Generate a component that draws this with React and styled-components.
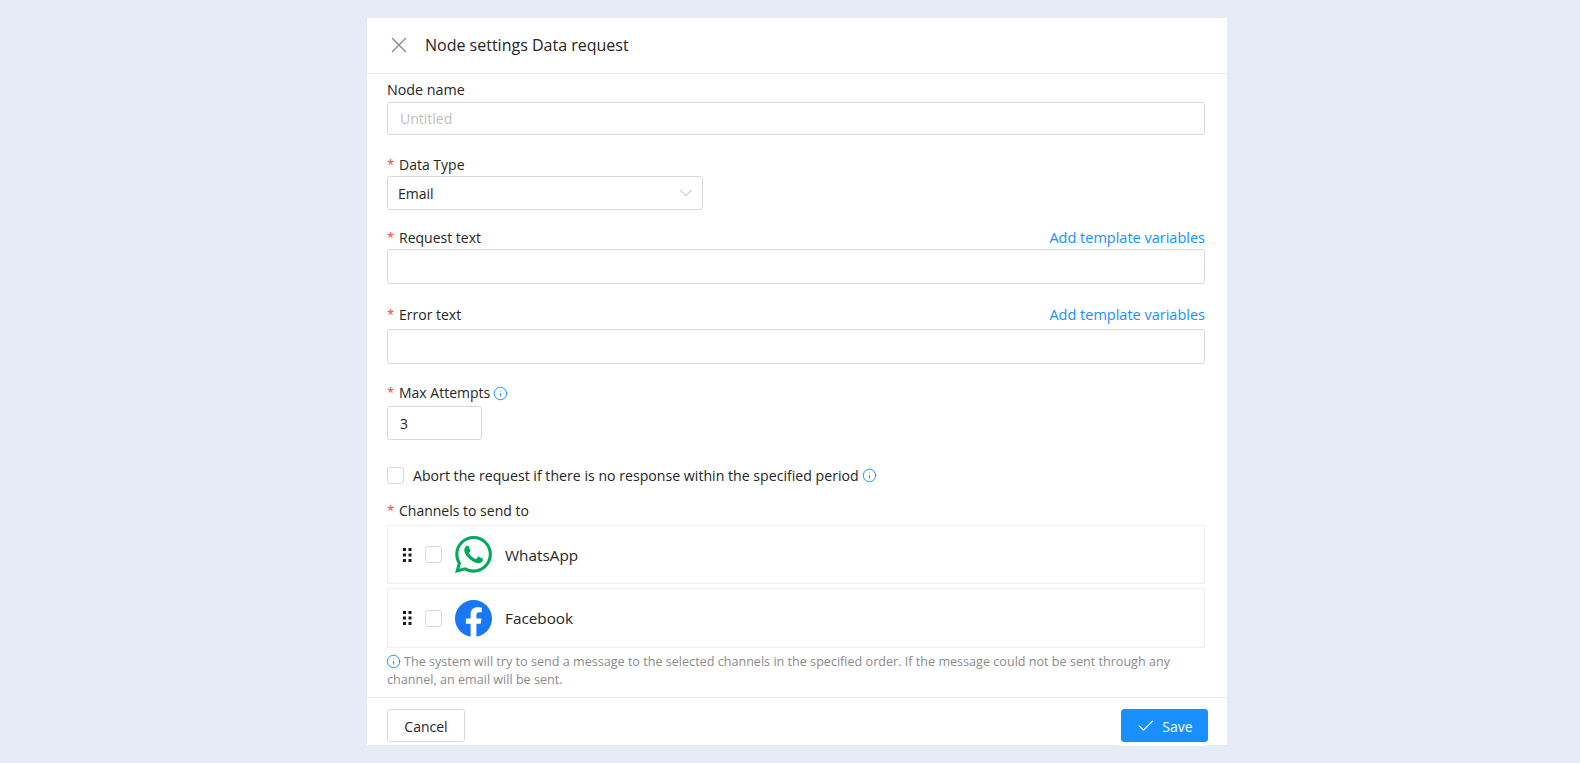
import React from 'react'
import styled, { createGlobalStyle } from 'styled-components'
import { Check, ChevronDown, Info, X } from 'lucide-react'

const GlobalStyle = createGlobalStyle`
    html, body {
        margin: 0;
        height: 100%;
        background: #e5ecf6;
        font-family: "Open Sans", "Noto Sans", sans-serif;
        font-size: 14px;
        color: #262626;
    }
    * {
        box-sizing: border-box;
    }
`
const Page = styled.div`
    display: flex;
    justify-content: center;
    padding: 18px 0 0 14px;
    height: 763px;
    overflow: hidden;
`
const Panel = styled.div`
    width: 860px;
    height: 727px;
    background: #fff;
    display: flex;
    flex-direction: column;
`
const Header = styled.div`
    display: flex;
    align-items: center;
    height: 56px;
    padding: 0 0 2px 19px;
    border-bottom: 1px solid #eaeaea;
    flex: none;
`
const CloseBtn = styled.div`
    display: flex;
    color: #8c8c8c;
    margin-right: 13px;
`
const Title = styled.div`
    font-size: 16px;
    color: #262626;
`
const Body = styled.div`
    flex: 1;
    padding: 5px 22px 0 20px;
`
const Field = styled.div`
    margin-bottom: ${(p) => p.$gap || 18}px;
`
const LabelRow = styled.div`
    display: flex;
    justify-content: space-between;
    align-items: center;
    height: 22px;
    margin-bottom: ${(p) => p.$gap || 0}px;
`
const Label = styled.div`
    display: flex;
    align-items: center;
    gap: 3px;
    line-height: 22px;
    font-size: ${(p) => p.$size || 14}px;
`
const Star = styled.span`
    color: #ff4d4f;
    font-family: "Liberation Mono", monospace;
    font-size: 17px;
    width: 9px;
    transform: translate(-1.5px, 2px);
`
const LinkText = styled.a`
    color: #1890ff;
    font-size: 14.5px;
    margin-bottom: 2px;
    cursor: pointer;
`
const Input = styled.div`
    display: flex;
    align-items: center;
    width: ${(p) => p.$width || '100%'};
    height: ${(p) => p.$height || 33}px;
    padding: 0 12px;
    border: 1px solid #d9d9d9;
    border-radius: 3px;
    color: ${(p) => (p.$placeholder ? '#bfbfbf' : '#262626')};
`
const Select = styled(Input)`
    justify-content: space-between;
    padding: 0 5px 0 10px;
    color: #bfbfbf;
`
const SelectValue = styled.span`
    color: #262626;
`
const CheckRow = styled.div`
    display: flex;
    align-items: center;
    height: 22px;
    margin-bottom: 14px;
`
const Box = styled.span`
    display: inline-block;
    flex: none;
    width: 17px;
    height: 17px;
    border: 1px solid #d9d9d9;
    border-radius: 3px;
    background: #fff;
`
const CheckText = styled.span`
    font-size: 14.15px;
    margin-left: 9px;
    margin-right: 3px;
`
const InfoIcon = styled(Info)`
    color: #1890ff;
    flex: none;
`
const Channel = styled.div`
    display: flex;
    align-items: center;
    height: ${(p) => p.$height || 59}px;
    margin-bottom: ${(p) => p.$gap || 4}px;
    padding-left: 15px;
    border: 1px solid #f0f0f0;
`
const ChannelName = styled.span`
    font-size: 15.3px;
`
const Grip = styled.svg`
    flex: none;
    margin-right: 13px;
`
const ChannelLogo = styled.svg`
    flex: none;
    margin-left: 13px;
    margin-right: 13px;
`
const Hint = styled.div`
    font-size: 12.6px;
    line-height: 18px;
    color: #8c8c8c;
`
const HintIcon = styled(Info)`
    color: #1890ff;
    vertical-align: -3px;
    margin: 0 3px 0 -1px;
`
const Footer = styled.div`
    display: flex;
    justify-content: space-between;
    align-items: flex-start;
    flex: none;
    height: 48px;
    padding: 11px 19px 0 20px;
    border-top: 1px solid #eaeaea;
`
const Button = styled.button`
    display: flex;
    align-items: center;
    justify-content: center;
    gap: 6px;
    height: 33px;
    width: ${(p) => p.$width}px;
    padding: 1px 0 0;
    font: inherit;
    border-radius: 3px;
    border: 1px solid ${(p) => (p.$primary ? '#1890ff' : '#d9d9d9')};
    background: ${(p) => (p.$primary ? '#1890ff' : '#fff')};
    color: ${(p) => (p.$primary ? '#fff' : '#262626')};
    box-shadow: ${(p) => (p.$primary ? '-2px -2px 0 6px #fff' : 'none')};
`

function Dots() {
    const dots = []
    for (const y of [0, 5.5, 11]) {
        dots.push(<rect key={'a' + y} x="0" y={y} width="3" height="3" />)
        dots.push(<rect key={'b' + y} x="5.5" y={y} width="3" height="3" />)
    }
    return (
        <Grip width="9" height="14" viewBox="0 0 9 14" fill="#1a1a1a">
            {dots}
        </Grip>
    )
}

function WhatsApp() {
    return (
        <ChannelLogo width="37" height="37" viewBox="0 0 24 24">
            <path
                fill="#00a95c"
                d="M17.472 14.382c-.297-.149-1.758-.867-2.03-.967-.273-.099-.471-.148-.67.15-.197.297-.767.966-.94 1.164-.173.199-.347.223-.644.075-.297-.15-1.255-.463-2.39-1.475-.883-.788-1.48-1.761-1.653-2.059-.173-.297-.018-.458.13-.606.134-.133.298-.347.446-.52.149-.174.198-.298.298-.497.099-.198.05-.371-.025-.52-.075-.149-.669-1.612-.916-2.207-.242-.579-.487-.5-.669-.51-.173-.008-.371-.01-.57-.01-.198 0-.52.074-.792.372-.272.297-1.04 1.016-1.04 2.479 0 1.462 1.065 2.875 1.213 3.074.149.198 2.096 3.2 5.077 4.487.709.306 1.262.489 1.694.625.712.227 1.36.195 1.871.118.571-.085 1.758-.719 2.006-1.413.248-.694.248-1.289.173-1.413-.074-.124-.272-.198-.57-.347m-5.421 7.403h-.004a9.87 9.87 0 0 1-5.031-1.378l-.361-.214-3.741.982.998-3.648-.235-.374a9.86 9.86 0 0 1-1.51-5.26c.001-5.45 4.436-9.884 9.888-9.884 2.64 0 5.122 1.03 6.988 2.898a9.825 9.825 0 0 1 2.893 6.994c-.003 5.45-4.437 9.884-9.885 9.884m8.413-18.297A11.815 11.815 0 0 0 12.05 0C5.495 0 .16 5.335.157 11.892c0 2.096.547 4.142 1.588 5.945L.057 24l6.305-1.654a11.882 11.882 0 0 0 5.683 1.448h.005c6.554 0 11.89-5.335 11.893-11.893a11.821 11.821 0 0 0-3.48-8.413z"
            />
        </ChannelLogo>
    )
}

function Facebook() {
    return (
        <ChannelLogo width="37" height="37" viewBox="0 0 24 24">
            <circle cx="12" cy="12" r="12" fill="#1877f2" />
            <path
                fill="#fff"
                d="M16.671 15.469 17.203 12h-3.328V9.75c0-.949.465-1.875 1.956-1.875h1.513V4.922s-1.374-.234-2.686-.234c-2.741 0-4.533 1.661-4.533 4.668V12H7.078v3.469h3.047V24a12.1 12.1 0 0 0 3.75 0v-8.531z"
            />
        </ChannelLogo>
    )
}

function App() {
    return (
        <>
            <GlobalStyle />
            <Page>
                <Panel>
                    <Header>
                        <CloseBtn>
                            <X size={26} strokeWidth={1.3} />
                        </CloseBtn>
                        <Title>Node settings Data request</Title>
                    </Header>
                    <Body>
                        <Field $gap={19}>
                            <LabelRow $gap={1}>
                                <Label $size={14.3}>Node name</Label>
                            </LabelRow>
                            <Input $placeholder>Untitled</Input>
                        </Field>
                        <Field $gap={17}>
                            <LabelRow>
                                <Label><Star>*</Star>Data Type</Label>
                            </LabelRow>
                            <Select $width="316px" $height={34}>
                                <SelectValue>Email</SelectValue>
                                <ChevronDown size={22} strokeWidth={1.1} />
                            </Select>
                        </Field>
                        <Field $gap={20}>
                            <LabelRow>
                                <Label><Star>*</Star>Request text</Label>
                                <LinkText>Add template variables</LinkText>
                            </LabelRow>
                            <Input $height={35} />
                        </Field>
                        <Field $gap={18}>
                            <LabelRow $gap={3}>
                                <Label><Star>*</Star>Error text</Label>
                                <LinkText>Add template variables</LinkText>
                            </LabelRow>
                            <Input $height={35} />
                        </Field>
                        <Field $gap={24}>
                            <LabelRow $gap={2}>
                                <Label><Star>*</Star>Max Attempts<InfoIcon size={15} strokeWidth={1.5} /></Label>
                            </LabelRow>
                            <Input $width="95px" $height={34}>3</Input>
                        </Field>
                        <CheckRow>
                            <Box />
                            <CheckText>Abort the request if there is no response within the specified period</CheckText>
                            <InfoIcon size={15} strokeWidth={1.5} />
                        </CheckRow>
                        <LabelRow $gap={3}>
                            <Label><Star>*</Star>Channels to send to</Label>
                        </LabelRow>
                        <Channel>
                            <Dots />
                            <Box />
                            <WhatsApp />
                            <ChannelName>WhatsApp</ChannelName>
                        </Channel>
                        <Channel $height={60} $gap={5}>
                            <Dots />
                            <Box />
                            <Facebook />
                            <ChannelName>Facebook</ChannelName>
                        </Channel>
                        <Hint>
                            <HintIcon size={15} strokeWidth={1.5} />
                            The system will try to send a message to the selected channels in the specified order. If the message could not be sent through any channel, an email will be sent.
                        </Hint>
                    </Body>
                    <Footer>
                        <Button $width={78}>Cancel</Button>
                        <Button $primary $width={87}>
                            <Check size={20} strokeWidth={1.3} />
                            Save
                        </Button>
                    </Footer>
                </Panel>
            </Page>
        </>
    )
}

export default App
